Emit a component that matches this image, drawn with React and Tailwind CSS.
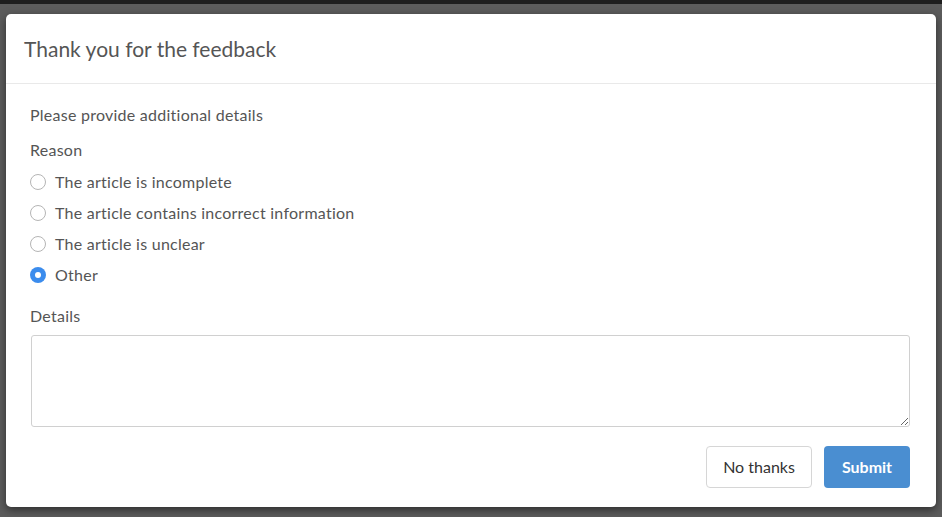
import { useState } from "react";

const reasons = [
  "The article is incomplete",
  "The article contains incorrect information",
  "The article is unclear",
  "Other",
];

const Radio = ({ checked }) =>
  checked ? (
    <span className="w-4 h-4 rounded-full bg-[#3b8ced] flex items-center justify-center shrink-0">
      <span className="w-[6px] h-[6px] rounded-full bg-white" />
    </span>
  ) : (
    <span className="w-4 h-4 rounded-full border border-[#b5b5b5] bg-white shrink-0" />
  );

const App = () => {
  const [reason, setReason] = useState("Other");

  return (
    <div
      className="w-[942px] h-[517px] bg-[#5c5c5c] border-t-4 border-[#1e1e1e] pt-[10px] px-[6px] overflow-hidden"
      style={{ fontFamily: "Lato, 'Open Sans', sans-serif" }}
    >
      <div className="w-[930px] h-[493px] bg-white rounded-[5px] shadow-[0_3px_8px_rgba(0,0,0,0.5)] flex flex-col">
        <div className="h-[70px] border-b border-[#e9e9e9] flex items-center px-[18px]">
          <h1 className="text-[21px] text-[#555]">Thank you for the feedback</h1>
        </div>

        <div className="pl-[24px] pr-[26px] pt-[21px] text-[16px] tracking-[0.25px] text-[#555]">
          <p className="leading-[20px]">Please provide additional details</p>
          <p className="leading-[20px] mt-[15px]">Reason</p>

          <div className="mt-[6px] flex flex-col">
            {reasons.map((r) => (
              <label
                key={r}
                onClick={() => setReason(r)}
                className="h-[31px] flex items-center gap-[9px] cursor-pointer"
              >
                <Radio checked={reason === r} />
                <span>{r}</span>
              </label>
            ))}
          </div>

          <p className="leading-[20px] mt-[16px]">Details</p>
          <textarea className="mt-[9px] ml-[1px] w-[879px] h-[92px] border border-[#d0d0d0] rounded-[3px] block outline-none p-2" />

          <div className="mt-[19px] flex justify-end gap-[12px]">
            <button className="w-[106px] h-[42px] border border-[#d6d6d6] rounded-[4px] bg-white text-[#333] text-[16px] tracking-normal">
              No thanks
            </button>
            <button className="w-[86px] h-[42px] rounded-[4px] bg-[#4a8ed1] text-white text-[16px] font-bold tracking-normal">
              Submit
            </button>
          </div>
        </div>
      </div>
    </div>
  );
};

export default App;
